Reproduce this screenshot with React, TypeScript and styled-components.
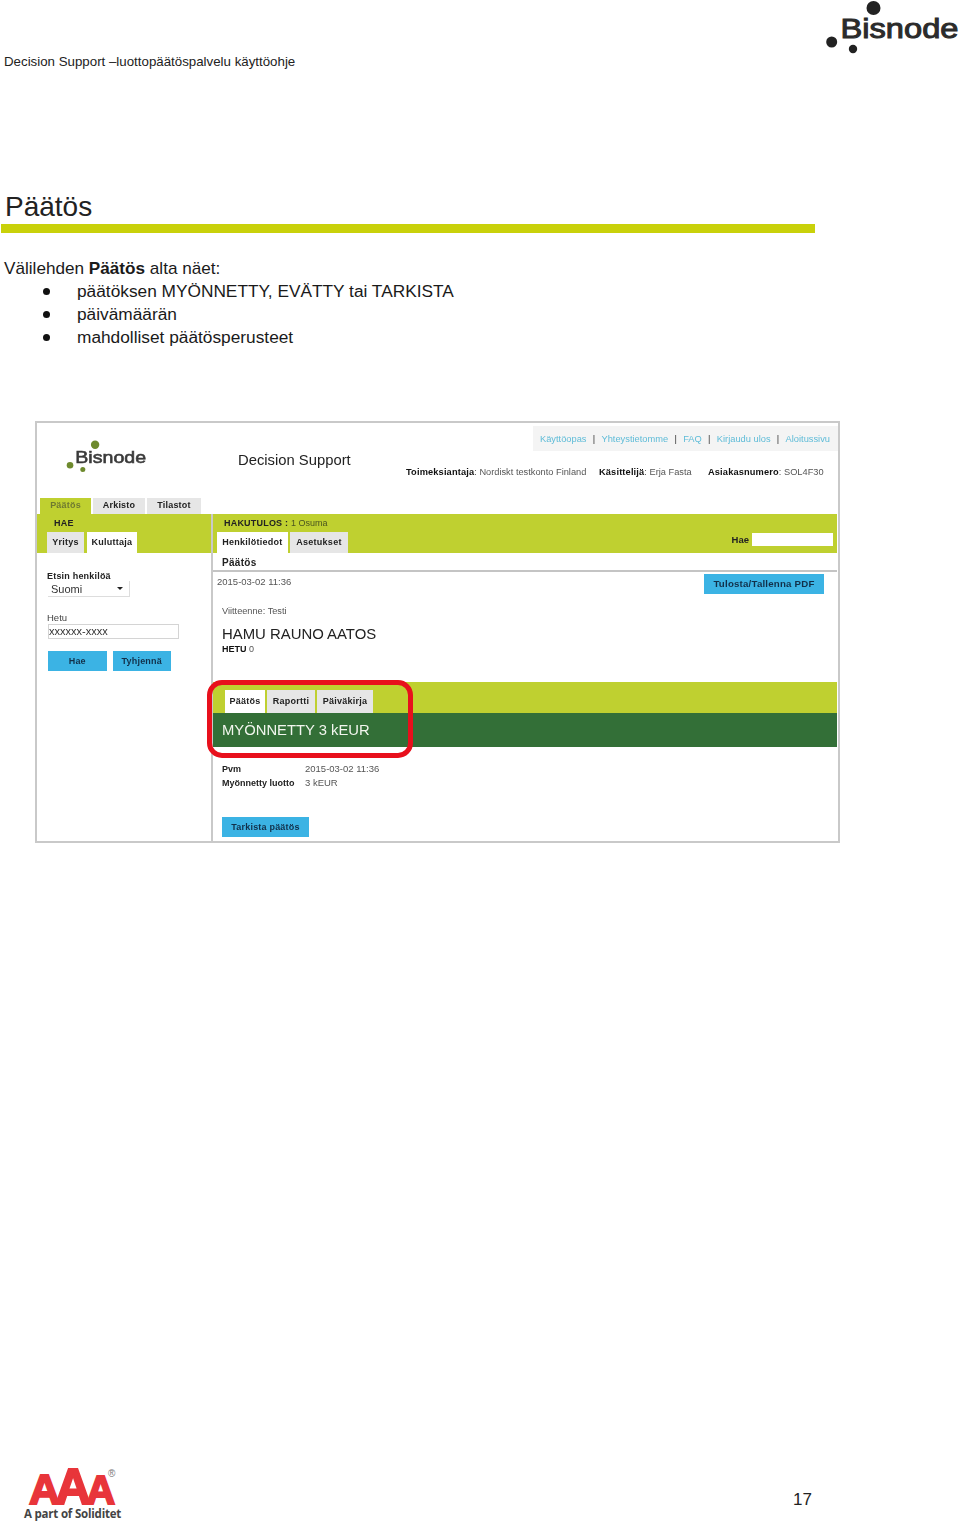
import React from "react";
import styled, { createGlobalStyle } from "styled-components";

const Global = createGlobalStyle`
  html, body { margin: 0; padding: 0; background: #fff; }
  body { font-family: "Liberation Sans", Arial, sans-serif; color: #111; }
  * { box-sizing: border-box; }
`;

const Page = styled.div`
  width: 960px;
  height: 1521px;
  display: flex;
  flex-direction: column;
  overflow: hidden;
`;

const Header = styled.header`
  height: 70px;
  display: flex;
  justify-content: space-between;
  align-items: flex-start;
  padding-left: 4px;
`;
const HeaderText = styled.div`
  margin-top: 54px;
  font-size: 13.3px;
  line-height: 16px;
  color: #222;
`;
const Title = styled.h1`
  margin: 120px 0 0 5px;
  font-size: 28px;
  line-height: 34px;
  font-weight: 400;
  color: #222;
`;
const Rule = styled.div`
  width: 814px;
  height: 9px;
  margin-left: 1px;
  background: #c9d10a;
`;
const Intro = styled.p`
  margin: 24px 0 0 4px;
  font-size: 17.15px;
  line-height: 23px;
  color: #1a1a1a;
`;
const BulletList = styled.ul`
  margin: 0;
  padding: 0 0 0 43px;
  list-style: none;
`;
const BulletItem = styled.li`
  display: flex;
  align-items: center;
  font-size: 17.3px;
  line-height: 23px;
  color: #1a1a1a;
  &::before {
    content: "";
    width: 7px;
    height: 7px;
    border-radius: 50%;
    background: #111;
    margin-right: 27px;
  }
`;

const Card = styled.section`
  width: 805px;
  height: 422px;
  margin: 72px 0 0 35px;
  border: 2px solid #c9c9c9;
  display: flex;
  flex-direction: column;
  filter: blur(0.4px);
`;
const CardTop = styled.div`
  height: 75px;
  display: flex;
  align-items: flex-start;
  padding-left: 29px;
`;
const CardLogo = styled.div`
  width: 172px;
  margin-top: 17px;
  flex: none;
`;
const AppName = styled.div`
  width: 168px;
  flex: none;
  margin-top: 28px;
  font-size: 14.8px;
  line-height: 18px;
  color: #222;
`;
const TopRight = styled.div`
  flex: 1;
  display: flex;
  flex-direction: column;
  align-items: flex-end;
  padding-top: 3px;
`;
const LinkBar = styled.nav`
  width: 305px;
  height: 25px;
  background: #f4f4f4;
  display: flex;
  align-items: center;
  justify-content: flex-end;
  padding-right: 8px;
  font-size: 9.3px;
  color: #5fbcd8;
  white-space: nowrap;
`;
const LinkSep = styled.span`
  color: #333;
  margin: 0 6.3px;
`;
const InfoLine = styled.div`
  width: 432px;
  margin-top: 15px;
  display: flex;
  font-size: 9.25px;
  line-height: 12px;
  color: #555;
`;
const InfoItem = styled.span<{ $w: number }>`
  width: ${(p) => p.$w}px;
  flex: none;
  white-space: nowrap;
  b { color: #111; letter-spacing: 0.15px; }
`;

const MainTabs = styled.div`
  height: 16px;
  display: flex;
  gap: 2px;
  padding-left: 3px;
`;
const MainTab = styled.div<{ $active?: boolean; $w: number }>`
  width: ${(p) => p.$w}px;
  background: ${(p) => (p.$active ? "#bfd030" : "#e6e6e6")};
  color: ${(p) => (p.$active ? "#6f7a30" : "#222")};
  font-size: 9px;
  font-weight: 700;
  line-height: 15px;
  text-align: center;
  letter-spacing: 0.2px;
`;

const Columns = styled.div`
  flex: 1;
  display: grid;
  grid-template-columns: 174px 1fr;
  padding-right: 1px;
`;
const LeftCol = styled.aside`
  display: flex;
  flex-direction: column;
`;
const RightCol = styled.div`
  display: flex;
  flex-direction: column;
  border-left: 2px solid #c9c9c9;
  position: relative;
`;
const OliveBand = styled.div`
  height: 39px;
  flex: none;
  background: #bfd030;
  display: flex;
  flex-direction: column;
  justify-content: space-between;
`;
const BandHeading = styled.div<{ $left: number }>`
  padding: 4px 0 0 ${(p) => p.$left}px;
  font-size: 9px;
  line-height: 11px;
  font-weight: 700;
  color: #222;
  letter-spacing: 0.2px;
  span { font-weight: 400; color: #4a5520; letter-spacing: 0; }
`;
const BandRow = styled.div<{ $left: number; $gap: number }>`
  display: flex;
  align-items: flex-end;
  gap: ${(p) => p.$gap}px;
  padding-left: ${(p) => p.$left}px;
`;
const SubTab = styled.div<{ $active?: boolean; $w: number; $h?: number }>`
  width: ${(p) => p.$w}px;
  height: ${(p) => p.$h ?? 21}px;
  background: ${(p) => (p.$active ? "#fff" : "#e6e6e6")};
  font-size: 9px;
  font-weight: 700;
  line-height: ${(p) => (p.$h ?? 21) - 1}px;
  text-align: center;
  color: #222;
  letter-spacing: 0.25px;
  flex: none;
`;
const SearchLabel = styled.span`
  margin-left: auto;
  align-self: flex-start;
  margin-top: 2px;
  font-size: 9.5px;
  line-height: 11px;
  font-weight: 700;
  color: #222;
`;
const SearchInput = styled.div`
  width: 81px;
  height: 13px;
  background: #fff;
  align-self: flex-start;
  margin: 1px 4px 0 1px;
`;

const LeftBody = styled.div`
  padding: 18px 0 0 10px;
  display: flex;
  flex-direction: column;
`;
const FieldTitle = styled.div`
  font-size: 9px;
  line-height: 10px;
  font-weight: 700;
  color: #222;
  letter-spacing: 0.2px;
`;
const SelectBox = styled.div`
  width: 82px;
  height: 16px;
  margin-left: 1px;
  padding: 0 6px 0 3px;
  display: flex;
  align-items: center;
  justify-content: space-between;
  border-right: 1px solid #ddd;
  border-bottom: 1px solid #ddd;
  font-size: 11px;
  color: #333;
  &::after {
    content: "";
    border-left: 3.5px solid transparent;
    border-right: 3.5px solid transparent;
    border-top: 3.5px solid #222;
  }
`;
const HetuLabel = styled.div`
  margin-top: 15px;
  font-size: 9.5px;
  line-height: 11px;
  color: #444;
`;
const HetuInput = styled.div`
  width: 131px;
  height: 15px;
  margin: 1px 0 0 1px;
  border: 1px solid #d4d4d4;
  font-size: 11px;
  line-height: 13px;
  color: #333;
`;
const ButtonRow = styled.div`
  display: flex;
  gap: 6px;
  margin: 12px 0 0 1px;
`;
const BlueButton = styled.div<{ $w: number }>`
  width: ${(p) => p.$w}px;
  height: 20px;
  background: #3bb3e4;
  color: #12304a;
  font-size: 9px;
  font-weight: 700;
  line-height: 20px;
  text-align: center;
  letter-spacing: 0.2px;
  flex: none;
`;
const PdfButton = styled(BlueButton)`
  font-size: 9.7px;
`;

const ResultHead = styled.div`
  height: 19px;
  padding-left: 9px;
  font-size: 10px;
  line-height: 20px;
  font-weight: 700;
  color: #222;
  letter-spacing: 0.3px;
  border-bottom: 2px solid #c4c4c4;
`;
const MetaRow = styled.div`
  display: flex;
  justify-content: space-between;
  align-items: flex-start;
  padding: 2px 13px 0 4px;
  height: 30px;
`;
const DateText = styled.div`
  margin-top: 1px;
  font-size: 9.5px;
  line-height: 14px;
  color: #555;
`;
const Reference = styled.div`
  margin: 3px 0 0 9px;
  font-size: 9.2px;
  line-height: 12px;
  color: #555;
`;
const Person = styled.div`
  margin: 8px 0 0 9px;
  font-size: 14.9px;
  line-height: 18px;
  color: #222;
`;
const Hetu = styled.div`
  margin: 0 0 0 9px;
  font-size: 9px;
  line-height: 12px;
  color: #555;
  b { color: #111; }
`;
const DecisionTabs = styled.div`
  margin-top: 27px;
  height: 31px;
  background: #bfd030;
  display: flex;
  align-items: flex-end;
  gap: 2px;
  padding-left: 12px;
`;
const Verdict = styled.div`
  height: 34px;
  background: #336f37;
  color: #f2f6ee;
  padding-left: 9px;
  font-size: 14.8px;
  line-height: 34px;
`;
const Highlight = styled.div`
  position: absolute;
  left: -6px;
  top: 166px;
  width: 206px;
  height: 78px;
  border: 5px solid #e8101c;
  border-radius: 15px;
`;
const DetailGrid = styled.dl`
  margin: 15px 0 0 9px;
  display: grid;
  grid-template-columns: 83px 1fr;
  font-size: 9.5px;
  line-height: 14px;
  color: #555;
  dt { font-size: 9px; font-weight: 700; color: #222; white-space: nowrap; }
  dd { margin: 0; }
`;
const CheckButton = styled(BlueButton)`
  margin: 27px 0 0 9px;
`;

const Footer = styled.footer`
  margin-top: auto;
  height: 62px;
  padding: 0 148px 0 24px;
  display: flex;
  justify-content: space-between;
  align-items: flex-start;
`;
const FooterBrand = styled.div`
  display: flex;
  flex-direction: column;
`;
const BrandCaption = styled.div`
  font-family: "Open Sans", sans-serif;
  font-size: 11.5px;
  line-height: 13px;
  font-weight: 700;
  color: #444;
  white-space: nowrap;
  letter-spacing: -0.2px;
`;
const PageNumber = styled.div`
  margin-top: 31px;
  font-size: 17px;
  line-height: 20px;
  color: #222;
`;

const BisnodeLogo = ({ width, color, dot }: { width: number; color: string; dot: string }) => (
  <svg width={width} viewBox="0 0 135 56" style={{ display: "block" }}>
    <circle cx="48.5" cy="8" r="7" fill={dot} />
    <circle cx="6.7" cy="42" r="5.5" fill={dot} />
    <circle cx="28" cy="49" r="4.2" fill={dot} />
    <text
      x="15.5"
      y="38"
      fontFamily="Liberation Sans, Arial, sans-serif"
      fontSize="28"
      textLength="118"
      lengthAdjust="spacingAndGlyphs"
      fill={color}
      stroke={color}
      strokeWidth="1"
    >
      Bisnode
    </text>
  </svg>
);

const AaaLogo = () => (
  <svg width="100" height="48" viewBox="0 0 100 48" style={{ display: "block", overflow: "visible" }}>
    <text x="5" y="45" fontFamily="Liberation Sans, Arial, sans-serif" fontWeight="700" fill="#e8353a">
      <tspan fontSize="43" stroke="#e8353a" strokeWidth="2">A</tspan>
      <tspan fontSize="50" dx="-5" stroke="#e8353a" strokeWidth="2">A</tspan>
      <tspan fontSize="40" dx="-5" stroke="#e8353a" strokeWidth="2">A</tspan>
      <tspan fontSize="10" fontWeight="400" dx="-7" dy="-27" fill="#777">®</tspan>
    </text>
  </svg>
);

export default function App() {
  return (
    <Page>
      <Global />
      <Header>
        <HeaderText>Decision Support –luottopäätöspalvelu käyttöohje</HeaderText>
        <BisnodeLogo width={135} color="#2b2b2b" dot="#222" />
      </Header>
      <Title>Päätös</Title>
      <Rule />
      <Intro>
        Välilehden <b>Päätös</b> alta näet:
      </Intro>
      <BulletList>
        <BulletItem>päätöksen MYÖNNETTY, EVÄTTY tai TARKISTA</BulletItem>
        <BulletItem>päivämäärän</BulletItem>
        <BulletItem>mahdolliset päätösperusteet</BulletItem>
      </BulletList>

      <Card>
        <CardTop>
          <CardLogo>
            <BisnodeLogo width={81} color="#3a3a3a" dot="#6e8a2e" />
          </CardLogo>
          <AppName>Decision Support</AppName>
          <TopRight>
            <LinkBar>
              Käyttöopas<LinkSep>|</LinkSep>Yhteystietomme<LinkSep>|</LinkSep>FAQ<LinkSep>|</LinkSep>Kirjaudu ulos<LinkSep>|</LinkSep>Aloitussivu
            </LinkBar>
            <InfoLine>
              <InfoItem $w={193}><b>Toimeksiantaja</b>: Nordiskt testkonto Finland</InfoItem>
              <InfoItem $w={109}><b>Käsittelijä</b>: Erja Fasta</InfoItem>
              <InfoItem $w={130}><b>Asiakasnumero</b>: SOL4F30</InfoItem>
            </InfoLine>
          </TopRight>
        </CardTop>
        <MainTabs>
          <MainTab $active $w={51}>Päätös</MainTab>
          <MainTab $w={52}>Arkisto</MainTab>
          <MainTab $w={54}>Tilastot</MainTab>
        </MainTabs>
        <Columns>
          <LeftCol>
            <OliveBand>
              <BandHeading $left={17}>HAE</BandHeading>
              <BandRow $left={10} $gap={3}>
                <SubTab $w={37}>Yritys</SubTab>
                <SubTab $w={50} $active>Kuluttaja</SubTab>
              </BandRow>
            </OliveBand>
            <LeftBody>
              <FieldTitle>Etsin henkilöä</FieldTitle>
              <SelectBox>Suomi</SelectBox>
              <HetuLabel>Hetu</HetuLabel>
              <HetuInput>xxxxxx-xxxx</HetuInput>
              <ButtonRow>
                <BlueButton $w={58.5}>Hae</BlueButton>
                <BlueButton $w={58.5}>Tyhjennä</BlueButton>
              </ButtonRow>
            </LeftBody>
          </LeftCol>
          <RightCol>
            <OliveBand>
              <BandHeading $left={11}>
                HAKUTULOS : <span>1 Osuma</span>
              </BandHeading>
              <BandRow $left={4} $gap={2}>
                <SubTab $w={71} $active>Henkilötiedot</SubTab>
                <SubTab $w={58}>Asetukset</SubTab>
                <SearchLabel>Hae</SearchLabel>
                <SearchInput />
              </BandRow>
            </OliveBand>
            <ResultHead>Päätös</ResultHead>
            <MetaRow>
              <DateText>2015-03-02 11:36</DateText>
              <PdfButton $w={120}>Tulosta/Tallenna PDF</PdfButton>
            </MetaRow>
            <Reference>Viitteenne: Testi</Reference>
            <Person>HAMU RAUNO AATOS</Person>
            <Hetu><b>HETU</b> 0</Hetu>
            <DecisionTabs>
              <SubTab $w={40} $h={23} $active>Päätös</SubTab>
              <SubTab $w={48} $h={23}>Raportti</SubTab>
              <SubTab $w={56} $h={23}>Päiväkirja</SubTab>
            </DecisionTabs>
            <Verdict>MYÖNNETTY 3 kEUR</Verdict>
            <Highlight />
            <DetailGrid>
              <dt>Pvm</dt><dd>2015-03-02 11:36</dd>
              <dt>Myönnetty luotto</dt><dd>3 kEUR</dd>
            </DetailGrid>
            <CheckButton $w={87}>Tarkista päätös</CheckButton>
          </RightCol>
        </Columns>
      </Card>

      <Footer>
        <FooterBrand>
          <AaaLogo />
          <BrandCaption>A part of Soliditet</BrandCaption>
        </FooterBrand>
        <PageNumber>17</PageNumber>
      </Footer>
    </Page>
  );
}
